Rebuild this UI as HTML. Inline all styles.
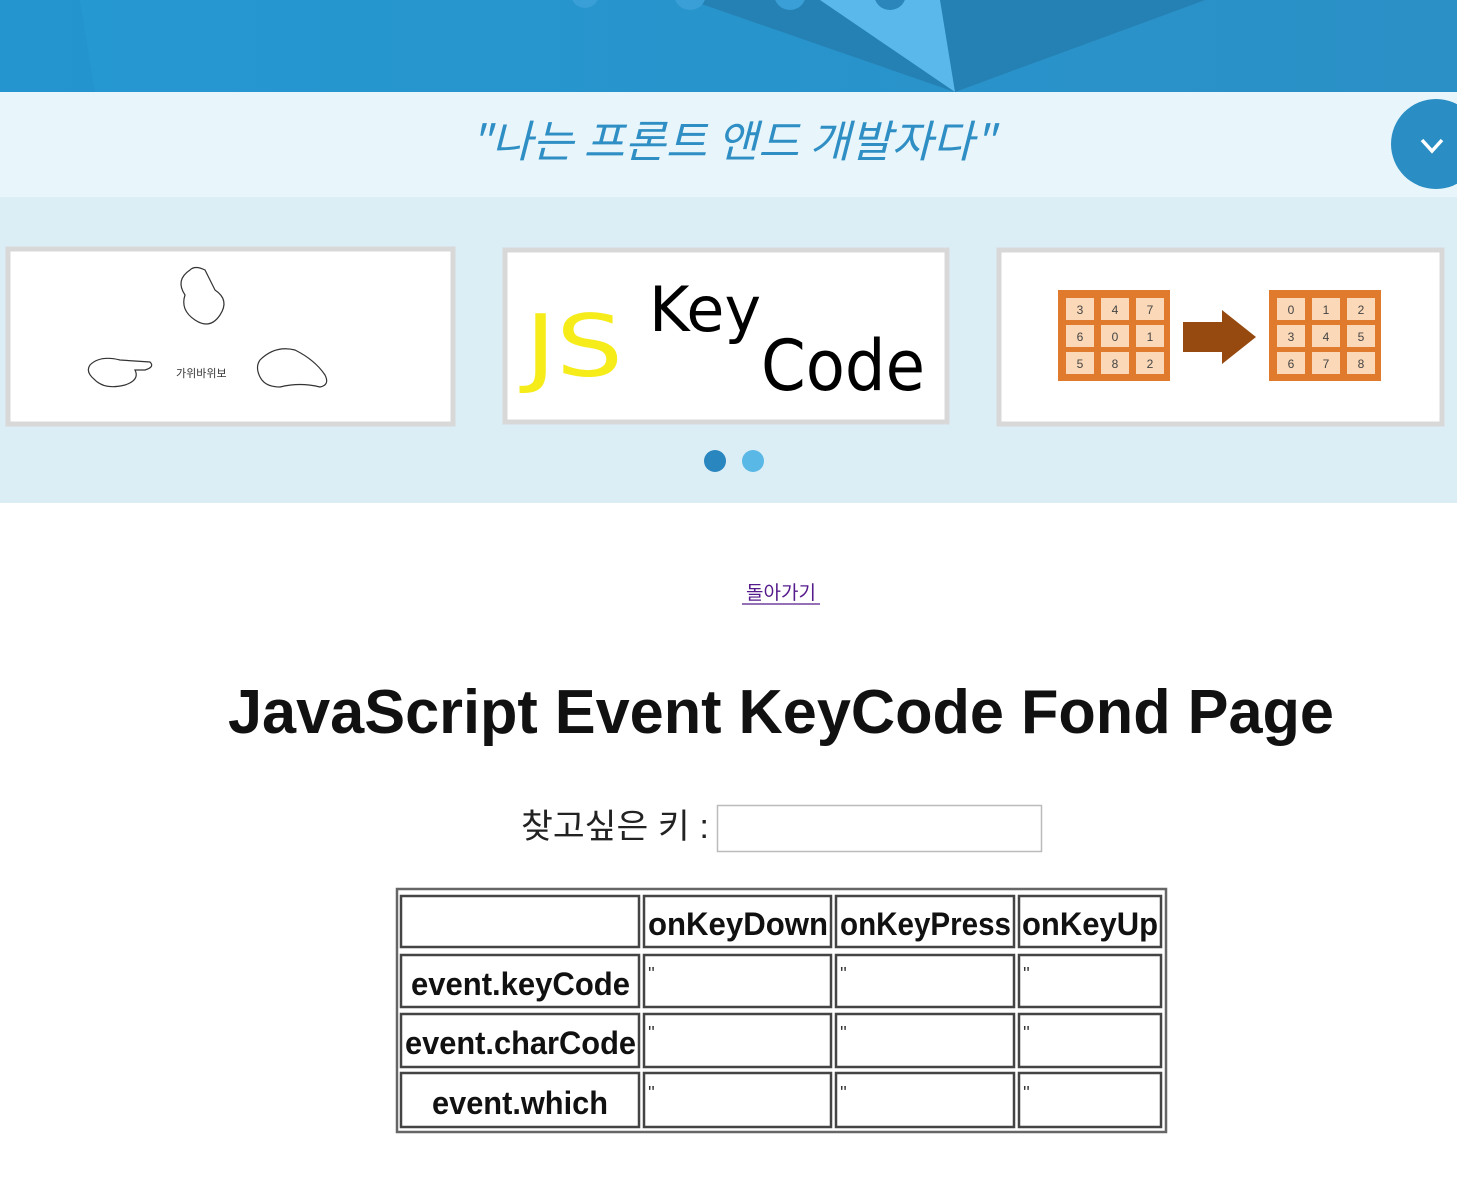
<!DOCTYPE html>
<html><head><meta charset="utf-8"><style>
html,body{margin:0;padding:0;background:#fff;}
svg{display:block}
</style></head><body>
<svg width="1457" height="1182" viewBox="0 0 1457 1182" xmlns="http://www.w3.org/2000/svg" font-family="'Liberation Sans','Noto Sans CJK KR',sans-serif">
<defs><linearGradient id="hg" x1="0" y1="0" x2="1" y2="0"><stop offset="0" stop-color="#2598d2"/><stop offset="1" stop-color="#2b90c6"/></linearGradient></defs>
<rect x="0" y="0" width="1457" height="92" fill="url(#hg)"/>
<polygon points="0,0 80,0 95,92 0,92" fill="#2392cc" opacity="0.5"/>
<polygon points="690,0 955,92 1205,0" fill="#2580b3"/>
<polygon points="820,0 955,92 940,0" fill="#5ab8ea"/>
<circle cx="585" cy="-6" r="14" fill="#3a9fd6"/><circle cx="690" cy="-6" r="16" fill="#3a9fd6"/><circle cx="790" cy="-6" r="16" fill="#3a9fd6"/><circle cx="890" cy="-6" r="16" fill="#2a86bb"/>
<rect x="0" y="92" width="1457" height="105" fill="#e8f6fc"/>
<text x="470" y="157" font-size="44" fill="#2f8fc4" textLength="525" lengthAdjust="spacingAndGlyphs" font-family="'Noto Sans CJK KR',sans-serif" font-style="italic">"나는 프론트 앤드 개발자다"</text>
<circle cx="1436" cy="144" r="45" fill="#2a8dc4"/>
<polyline points="1422,140 1432,151 1442,140" fill="none" stroke="#fff" stroke-width="3.5"/>
<rect x="0" y="197" width="1457" height="306" fill="#dbeef6"/>
<!-- cards -->
<rect x="8" y="249" width="445" height="175" fill="#fff" stroke="#d8d8d8" stroke-width="5"/>
<rect x="505" y="250" width="442" height="172" fill="#fff" stroke="#d8d8d8" stroke-width="5"/>
<rect x="999" y="250" width="443" height="174" fill="#fff" stroke="#d8d8d8" stroke-width="5"/>
<g fill="none" stroke="#333" stroke-width="1.2">
<path d="M190,270 q-15,10 -5,25 q-5,15 10,25 q15,10 25,-5 q10,-15 -5,-25 q-5,-10 -10,-20 q-10,-5 -15,0z"/>
<path d="M90,365 q10,-10 30,-5 l30,2 q5,5 -5,8 l-10,0 q5,10 -10,15 q-20,5 -30,-5 q-10,-8 -5,-15z"/>
<path d="M260,360 q15,-15 35,-10 q20,10 30,25 q5,10 -5,12 q-20,-5 -40,0 q-15,0 -20,-10 q-5,-10 0,-17z"/>
</g>
<text x="176" y="377" font-size="11" fill="#333">가위바위보</text>
<text x="525" y="376" font-size="86" fill="#f5ec1a" textLength="98" lengthAdjust="spacingAndGlyphs" font-family="'DejaVu Sans',sans-serif">JS</text>
<text x="649" y="331" font-size="62" fill="#000" textLength="112" lengthAdjust="spacingAndGlyphs" font-family="'DejaVu Sans',sans-serif">Key</text>
<text x="761" y="390" font-size="70" fill="#000" textLength="164" lengthAdjust="spacingAndGlyphs" font-family="'DejaVu Sans',sans-serif">Code</text>
<g font-size="12" fill="#444" text-anchor="middle">
<rect x="1058" y="290" width="112" height="91" fill="#e07a2c"/>
<rect x="1269" y="290" width="112" height="91" fill="#e07a2c"/>
<g fill="#fbd8b8">
<rect x="1066" y="298" width="28" height="22"/><rect x="1101" y="298" width="28" height="22"/><rect x="1136" y="298" width="28" height="22"/>
<rect x="1066" y="325" width="28" height="22"/><rect x="1101" y="325" width="28" height="22"/><rect x="1136" y="325" width="28" height="22"/>
<rect x="1066" y="352" width="28" height="22"/><rect x="1101" y="352" width="28" height="22"/><rect x="1136" y="352" width="28" height="22"/>
<rect x="1277" y="298" width="28" height="22"/><rect x="1312" y="298" width="28" height="22"/><rect x="1347" y="298" width="28" height="22"/>
<rect x="1277" y="325" width="28" height="22"/><rect x="1312" y="325" width="28" height="22"/><rect x="1347" y="325" width="28" height="22"/>
<rect x="1277" y="352" width="28" height="22"/><rect x="1312" y="352" width="28" height="22"/><rect x="1347" y="352" width="28" height="22"/>
</g>
<text x="1080" y="314">3</text><text x="1115" y="314">4</text><text x="1150" y="314">7</text>
<text x="1080" y="341">6</text><text x="1115" y="341">0</text><text x="1150" y="341">1</text>
<text x="1080" y="368">5</text><text x="1115" y="368">8</text><text x="1150" y="368">2</text>
<text x="1291" y="314">0</text><text x="1326" y="314">1</text><text x="1361" y="314">2</text>
<text x="1291" y="341">3</text><text x="1326" y="341">4</text><text x="1361" y="341">5</text>
<text x="1291" y="368">6</text><text x="1326" y="368">7</text><text x="1361" y="368">8</text>
</g>
<polygon points="1183,322 1222,322 1222,310 1256,337 1222,364 1222,352 1183,352" fill="#974a10"/>
<circle cx="715" cy="461" r="11" fill="#2a86bf"/>
<circle cx="753" cy="461" r="11" fill="#5ab8e6"/>
<!-- content -->
<text x="781" y="599" font-size="19" fill="#551a8b" text-anchor="middle">돌아가기</text>
<line x1="742" y1="604" x2="820" y2="604" stroke="#551a8b" stroke-width="1.3"/>
<text x="228" y="733" font-size="62" font-weight="bold" fill="#111" textLength="1106" lengthAdjust="spacingAndGlyphs">JavaScript Event KeyCode Fond Page</text>
<text x="521" y="838" font-size="34" fill="#222" textLength="188" lengthAdjust="spacingAndGlyphs">찾고싶은 키 :</text>
<rect x="717.5" y="805.5" width="324" height="46" fill="#fff" stroke="#bbb" stroke-width="1.5"/>
<!-- table -->
<rect x="397" y="889" width="769" height="243" fill="#fff" stroke="#666" stroke-width="2.5"/>
<g fill="none" stroke="#444" stroke-width="2.5">
<rect x="401" y="896" width="238" height="51"/><rect x="644" y="896" width="187" height="51"/><rect x="836" y="896" width="178" height="51"/><rect x="1019" y="896" width="142" height="51"/>
<rect x="401" y="955" width="238" height="52"/><rect x="644" y="955" width="187" height="52"/><rect x="836" y="955" width="178" height="52"/><rect x="1019" y="955" width="142" height="52"/>
<rect x="401" y="1014" width="238" height="53"/><rect x="644" y="1014" width="187" height="53"/><rect x="836" y="1014" width="178" height="53"/><rect x="1019" y="1014" width="142" height="53"/>
<rect x="401" y="1073" width="238" height="54"/><rect x="644" y="1073" width="187" height="54"/><rect x="836" y="1073" width="178" height="54"/><rect x="1019" y="1073" width="142" height="54"/>
</g>
<g font-size="32" font-weight="bold" fill="#111">
<text x="648" y="935" textLength="180" lengthAdjust="spacingAndGlyphs">onKeyDown</text>
<text x="840" y="935" textLength="171" lengthAdjust="spacingAndGlyphs">onKeyPress</text>
<text x="1022" y="935" textLength="136" lengthAdjust="spacingAndGlyphs">onKeyUp</text>
<text x="411" y="995" textLength="219" lengthAdjust="spacingAndGlyphs">event.keyCode</text>
<text x="405" y="1054" textLength="231" lengthAdjust="spacingAndGlyphs">event.charCode</text>
<text x="432" y="1114" textLength="176" lengthAdjust="spacingAndGlyphs">event.which</text>
</g>
<g font-size="18" fill="#333">
<text x="648" y="980">''</text><text x="840" y="980">''</text><text x="1023" y="980">''</text>
<text x="648" y="1039">''</text><text x="840" y="1039">''</text><text x="1023" y="1039">''</text>
<text x="648" y="1099">''</text><text x="840" y="1099">''</text><text x="1023" y="1099">''</text>
</g>
</svg>
</body></html>
